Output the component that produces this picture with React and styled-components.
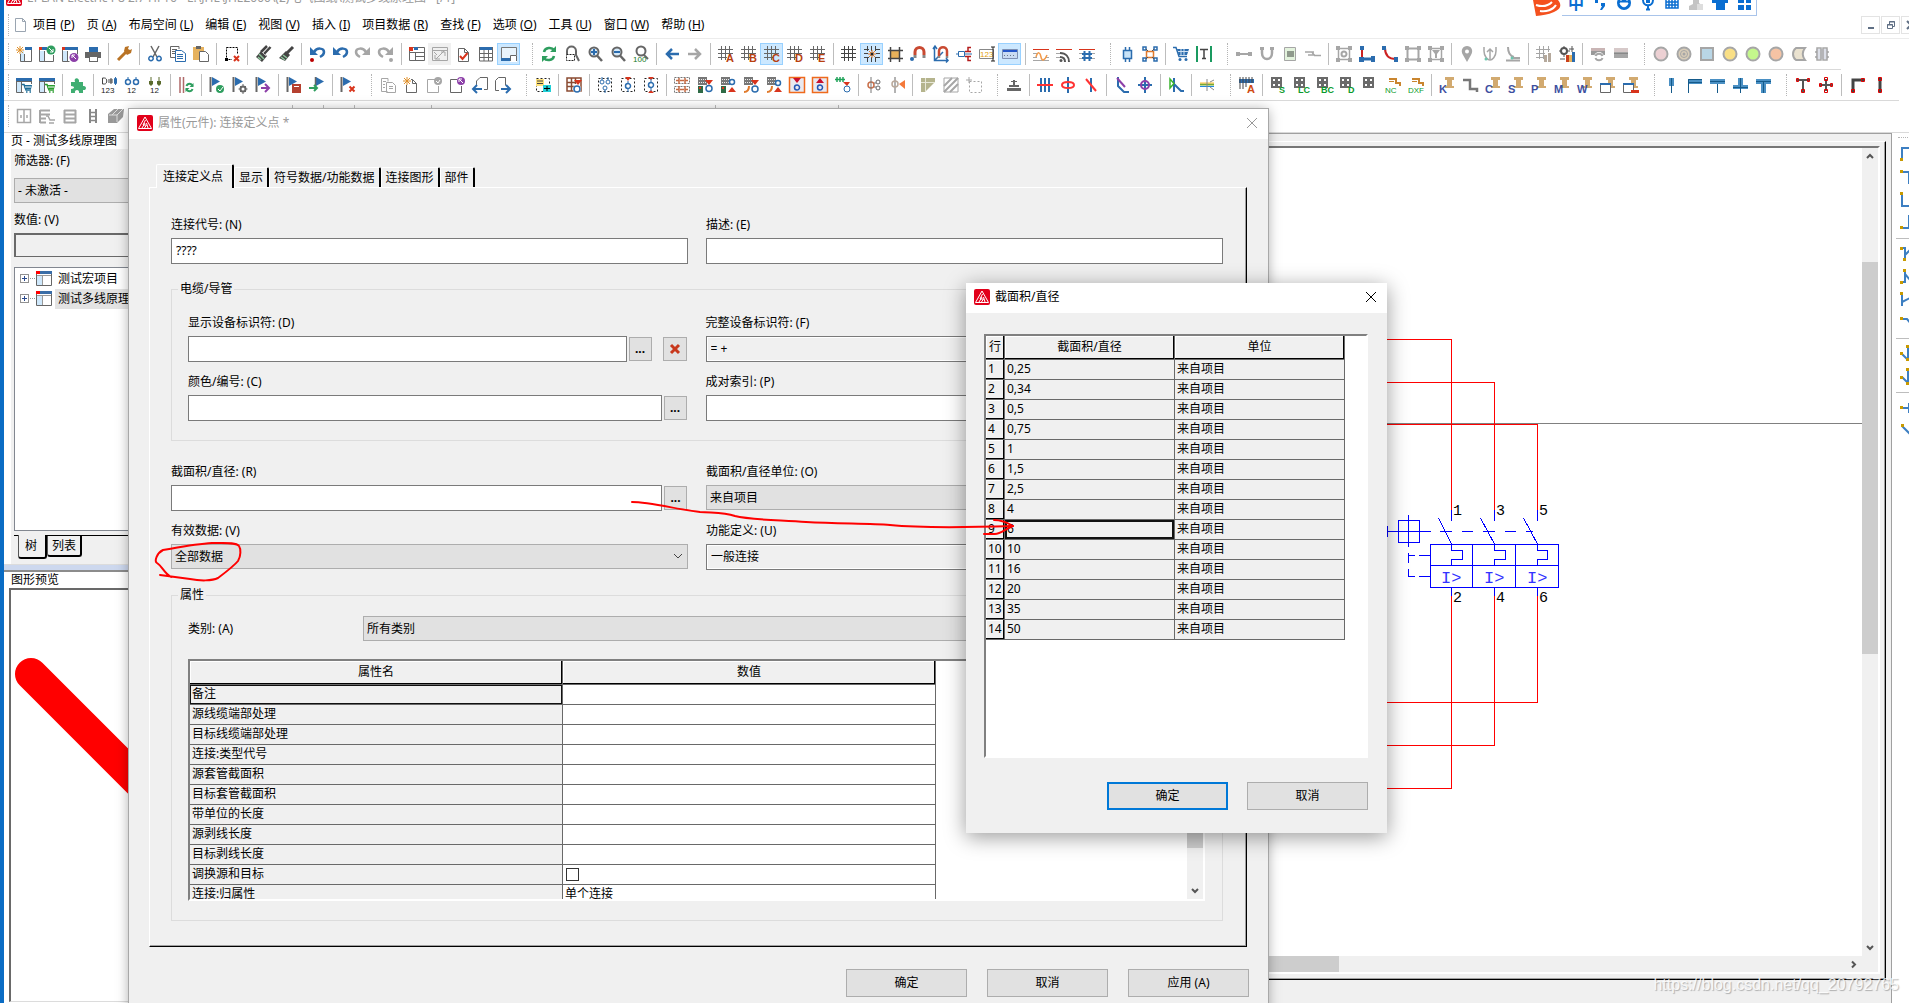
import { useState } from "react";
import styled, { createGlobalStyle } from "styled-components";

const GlobalStyle = createGlobalStyle`
    * {
        box-sizing: border-box;
    }
    body {
        margin: 0;
        overflow: hidden;
    }
    body, button, input, select, table {
        font-family: "Noto Sans", "Noto Sans CJK SC", sans-serif;
        font-size: 12px;
        line-height: 16px;
        color: #000;
    }
`;

/* ---------- icon data ---------- */
// s = stroke [d, colour, width, dash], f = fill [d, colour], t = text [text, x, y, colour, size]
const G = "#666";
const A = "#a6a6a6";
const B = "#2b6cae";
const N = "#2f9e5f";
const R = "#d8341c";
const O = "#c9852f";
const P = "#8c3fa8";
const s = (d, c = G, w = 1, dash) => ({ k: "s", d, c, w, dash });
const f = (d, c = G) => ({ k: "f", d, c });
const t = (text, x, y, c = G, size = 9) => ({ k: "t", text, x, y, c, size });
const dot = (x, y, r, c) => f(`M${x - r} ${y}a${r} ${r} 0 1 0 ${2 * r} 0a${r} ${r} 0 1 0 ${-2 * r} 0z`, c);
const ring = (x, y, r, c, w) => s(`M${x - r} ${y}a${r} ${r} 0 1 0 ${2 * r} 0a${r} ${r} 0 1 0 ${-2 * r} 0z`, c, w);

const star = s("M4 0v8M0 4h8M1 1l6 6M7 1L1 7", "#e0902a");
const hash = s("M3.5 0v14M7.5 0v14M11.5 0v9M0 3.5h15M0 7.5h15M0 11.5h9");
const glass = [ring(7, 6, 4.5, G, 2), s("M10 9.5l5 5.5", G, 2.5)];
const flag = [s("M1.5 0v15", G, 2), f("M3 0l8 4.5L3 9z", B)];
const smallX = s("M9.5 9.5l5 5M14.5 9.5l-5 5", R, 2);
const page = (c = G) => s("M3.5 15.5v-13h6l4 4v9zM9.5 2.5v4h4", c);
const dashBox = (c = "#222") => s("M1.5 1.5h13v13h-13z", c, 1, "2 2");
const sheet = [f("M0 1h16v3H0z", B), f("M1 4h4v11H1z", "#cfe8fb"), s("M.5 4v11.5h7M5.5 4.5v11M1 4.5h15M15.5 4v3")];
const cartSmall = (c) => [f("M8 8h8l-1 4H9z", c), s("M6 7.500h2l2 5.500h5M10 15h1.500M13.500 15H15", c, 1.5), s("M9 10h6", "#fff")];
const node = [f("M1 0h9v8H1z", "#777"), s("M2 2.5h7M2 5.5h7", "#eee", 1, "1 1")];
const redTri = f("M8 3h8l-4 5z", R);
const post = (c) => [f("M6 0h9v3H6zM8 3h5v6H8zM6 9h9v2H6z", "#d2aa70"), t(c, 0, 16, "#3d4fa0", 11)];
const block = (c) => [
    f("M1 0h11v11H1z", "#6a6a6a"),
    f("M3 2h2v2H3zM8 2h2v2H8zM3 7h2v2H3zM8 7h2v2H8z", "#fff"),
    t(c, c.length > 1 ? 5 : 9, 16, "#0a9b2c", 9),
];
const blob = (c) => [dot(8, 8, 6, c), ring(8, 8, 6.5, A, 2)];
const corner = (d) => [s(d, "#3d7fc2", 2)];
const pin = (x, y) => [f(`M${x} ${y}h3v3H${x}z`, "#c89a00")];

const ICONS = {
    newProject: [f("M5 5h3v10H5z", "#cfe8fb"), s("M4.5 8v7.5h11V3"), s("M8.5 8v7"), f("M9 1h7v3H9z", B), star],
    openProject: [f("M0 1h3v3H0z", R), f("M3 1h5v3H3z", B), f("M1 5h4v10H1z", "#cfe8fb"), s("M.5 4v11.5h14V9"), s("M5.5 5v10"), dot(12, 4, 4.5, N), s("M10 2l4 4M14 3v3h-3", "#fff")],
    closeProject: [f("M0 1h3v3H0z", R), f("M3 1h13v3H3z", B), f("M1 5h4v10H1z", "#cfe8fb"), s("M.5 4v11.5h7M5.5 5v10M15.500 4v4"), dot(12, 11.5, 4.5, P), s("M14 13l-4-4M10 12V9h3", "#fff")],
    print: [f("M4 1h9v5H4z", B), f("M0 6h16v6H0z", G), f("M4 10h9v6H4z", G), f("M5 11h7v4H5z", "#fff")],
    wrench: [s("M2 14l8-8", "#b97325", 3), f("M8 5l1-4 4-1-1 3 2 1 2-1-1 4-4 2z", "#b97325")],
    cut: [s("M4 0l6 11M12 0L6 11", G, 1.5), ring(4, 12.5, 2.2, B, 1.5), ring(12, 12.5, 2.2, B, 1.5)],
    copy: [s("M9 3V.5H.5v11H5M2 3.5h5M2 5.5h3M2 7.5h3"), f("M5 4h7l4 3v9H5z", "#fff"), s("M5.5 4.5h6l4 3v8h-10zM7 8.5h6M7 10.5h6M7 12.5h6", B)],
    paste: [f("M0 1h11v13H0z", "#e6b25e"), f("M3 0h5v3H3z", G), f("M6 5h7l3 3v8H6z", "#fff"), s("M6.5 5.5h6l3 3v7h-9z")],
    delSel: [s("M2.5 1.5h11v12h-11z", "#000", 1, "2 1"), f("M1 12h3v3H1z", "#000"), f("M8 8h8v8H8z", "#fff"), s("M10 10l5 5M15 10l-5 5", R, 2)],
    brush: [s("M15.500 1L9 8M12 0L6 6", "#444", 2.5), f("M6 5l6 5-5 6-6-5z", "#444"), s("M4 8l5 5M3 11l3 3", "#8cc49a", 1.5), s("M7 6l4 4", "#bbb")],
    brushOne: [s("M15 1L9 7", "#444", 3), f("M8 5l4 4-5 6-6-3z", "#444"), s("M3 11l4 3M5 9l4 3", "#8cc49a", 1.5)],
    undoDot: [f("M1 1v8h8z", B), s("M5 6c3-5 10-4 10 0 0 3-2 4-4 5", B, 2.5), dot(3, 14, 2, "#b00")],
    undo: [f("M1 1v8h8z", B), s("M5 6c3-5 10-4 10 0 0 3-2 4-4 5", B, 2.5)],
    redo: [f("M15 1v8H7z", A), s("M11 6C8 1 1 2 1 6c0 3 2 4 4 5", A, 2.5)],
    redoDot: [f("M15 1v8H7z", A), s("M11 6C8 1 1 2 1 6c0 3 2 4 4 5", A, 2.5), dot(13, 14, 2, A)],
    navigator: [s("M.5 1.5h15v13H.5zM.5 6.5h15M6.5 6v8M6.5 10.5h9"), f("M0 1h4v4H0z", R), f("M5 1h4v3H5z", B)],
    navigatorOff: [s("M.5 1.5h15v13H.5zM.5 4.5h15", A), s("M4 13l8-8M3 9v4h5M9 6h4v4M2 6l3 3", A)],
    check: [page(), s("M5 10l2.500 3 5-6", R, 2)],
    table: [f("M1 1h14v3H1z", B), s("M1.5 1v14h13V1M1 7.500h14M1 11.500h14M6 4v11M10.500 4v11")],
    preview: [f("M1 2h14v12H1z", "#e9f4fc"), s("M.5 1.500h15v13H.5z", "#777"), f("M0 12h9v3H0z", B), f("M9 9h7v7H9z", "#fff"), s("M9.500 15V9.500h6V15", G)],
    refresh: [s("M3 6c1-5 8-5 10-2M13 10c-1 5-8 5-10 2", N, 2.5), f("M15 0v6H9zM1 16v-6h6z", N)],
    zoomWindow: [s("M3 8V5c0-6 9-6 9 0v4l3 6", G, 2), s("M2.500 8.500h8v6h-8z", "#222", 1, "2 1")],
    zoomIn: [dot(7, 6, 5, "#d6e9f8"), ...glass, s("M4 6h6M7 3v6", B, 2)],
    zoomOut: [dot(7, 6, 5, "#d6e9f8"), ...glass, s("M4 6h6", B, 2)],
    zoom100: [ring(8, 5, 4.5, G, 2), s("M11 9l4 4", G, 2), t("100", 0, 16, "#137a1b", 8)],
    back: [s("M3 8h12M8 3L3 8l5 5", B, 2.5)],
    forward: [s("M1 8h12M8 3l5 5-5 5", A, 2.5)],
    gridA: [hash, t("A", 8, 16, "#b8400e", 11)],
    gridB: [hash, t("B", 8, 16, "#b8400e", 11)],
    gridC: [hash, t("C", 8, 16, "#b8400e", 11)],
    gridD: [hash, t("D", 8, 16, "#b8400e", 11)],
    gridE: [hash, t("E", 8, 16, "#b8400e", 11)],
    grid: [s("M3.500 0v15M7.500 0v15M11.500 0v15M0 3.500h15M0 7.500h15M0 11.500h15", "#444")],
    gridSnap: [s("M3.500 0v5M7.500 0v5M11.500 0v5M3.500 11v5M7.500 11v5M11.500 11v5M0 3.500h5M11 3.500h5M0 7.500h4M12 7.500h4M0 11.500h5M11 11.500h5", "#444"), s("M8 4v8M4 8h8M5 5l6 6M11 5l-6 6", "#f07a20"), dot(8, 8, 1.5, "#222")],
    design: [f("M4 4h9v9H4z", "#e8b15a"), s("M3.500 1v15M12.500 1v15M1 4.500h15M1 12.500h15", "#444", 1.5)],
    magnet: [s("M5 9V6c0-6 9-6 9 0v3", "#c94a32", 3), s("M5 9v3M14 9v3", "#888", 3), dot(2, 13, 2, B)],
    magnetAxis: [s("M1.500 1v13.500H15M0 3l2-3 2 3M13 12l2 2.500-2 2M2 14L10 6", B, 1.5), s("M6 10V5c0-5 8-5 8 0v5", "#c94a32", 2.5), s("M6 10v2M14 10v2", "#888", 2.5)],
    bracket: [s("M15 1.500h-3v4H9M15 14.500h-3v-4H9M15 5.500h-3M15 10.500h-3", "#b31b1b", 1.5), s("M2.500 5.500h6v5h-6zM0 8h2M8 8h8", B)],
    num123: [s("M.5 3.500h14v9H.5z", "#888"), t("123", 1, 11, "#e3a008", 8), s("M14 1v14M12 1h4M12 15h4", "#222")],
    ruler: [f("M0 4h16v9H0z", "#c8daf2"), s("M.5 3.500h15v9H.5z", "#7d8fb3"), s("M1 5h14", "#2456c9", 2), s("M2 9.500h12", "#678", 1, "1 2")],
    wave: [s("M0 3.500h16", R), s("M0 7.500h5M0 14.500h16M0 11.500h4M13 11.500h3", A), s("M3 11c2-6 4-5 5 0s4 3 6-2", "#f29a4a", 1.5)],
    wifi: [s("M0 3.500h16", R), s("M0 7.500h4M0 11.500h4", A), s("M4 7c6 0 9 4 9 9M4 11c3 0 5 2 5 5", "#555", 2), dot(5, 14.5, 1.5, "#555")],
    hashWave: [s("M0 3.500h16", R), s("M0 7.500h16M0 12.500h16", A), s("M5.500 5v10M10.500 5v10M3 8h10M3 12h10", B, 2)],
    chip: [f("M4 5h8v7H4z", "#c9e3f7"), s("M4.500 4.500h8v8h-8zM6.500 1v3M10.500 1v3M6.500 13v3M10.500 13v3", B, 1.5)],
    chipNet: [s("M4.500 5.500h7v6h-7z", "#e07a2c", 1.5), s("M1 1h3v3H1zM12 1h3v3h-3zM1 12h3v3H1zM12 12h3v3h-3z", B, 1.5), s("M4 3l2 2M12 3l-2 2M4 13l2-2M12 13l-2-2", "#555")],
    cart: [s("M0 1.500h3l3 9h8", B, 1.5), f("M4 3h12l-2 6H6z", B), s("M5 5.500h10M8 3v6M11 3v6", "#cfe0f2"), dot(7, 13.5, 1.5, B), dot(13, 13.5, 1.5, B)],
    textT: [s("M1 0v16M15 0v16", "#1a9a60", 2), s("M4 3.500h8M8 3v10M6 12.500h4", "#444", 1.5)],
    link: [s("M1 8h14", A, 2), f("M0 6h4v4H0zM12 6h4v4h-4z", A)],
    curve: [s("M3 2v5c0 8 10 8 10 0V2", A, 2.5), f("M1 1h4v3H1zM11 1h4v3h-4z", A)],
    greenBox: [f("M2 2h12v13H2z", "#e3f3dd"), s("M2.500 1.500h11v13h-11z", A), f("M5 5h7v6H5z", "#8f9a8c")],
    zig: [s("M0 6h9M3 9h7M7 6l2 3M9 9.500h7", A, 1.5)],
    frameGear: [s("M2.500 2.500h11v11h-11z", A, 1.5), f("M0 0h4v4H0zM12 0h4v4h-4zM0 12h4v4H0zM12 12h4v4h-4z", A), ring(8, 8, 2.5, A, 2)],
    elbow: [s("M3 2v11", "#c22", 2), s("M3 13h10", B, 3), f("M1 0h4v4H1zM0 11h5v5H0zM12 10h4v6h-4z", B)],
    elbowRed: [s("M3 2c0 7 3 11 11 11", "#c22", 2), f("M0 0h4v4H0zM12 11h4v5h-4z", B)],
    frame: [s("M2.500 2.500h11v11h-11z", A, 2), f("M0 0h4v4H0zM12 0h4v4h-4zM0 12h4v4H0zM12 12h4v4h-4z", A)],
    frameFilter: [s("M2.500 2.500h11v11h-11z", A, 1.5), f("M0 0h4v4H0zM12 0h4v4h-4zM0 12h4v4H0zM12 12h4v4h-4zM4 4h8L9 8v4H7V8z", A)],
    place: [f("M8 16L4 9C1 4 4 0 8 0s7 4 4 9z", A), dot(8, 5.5, 2, "#fff")],
    forkU: [s("M2 1v4c0 6 4 9 6 9s6-3 6-9V1M8 4v9M5 6l3-3 3 3", A, 1.5), dot(4, 13, 1.5, "#6cc7ae")],
    forkL: [s("M3 1c0 6 2 9 6 10M1 14.500h14M7 12h8", A, 2), dot(7, 12, 1.5, "#6cc7ae")],
    hashPaint: [s("M3.500 0v13M7.500 0v13M12.500 0v6M0 3.500h14M0 7.500h9M0 11.500h7", A), f("M8 9h3v7H8zM12 7h3v9h-3z", "#b5a99c")],
    gearPaint: [ring(5, 5, 3, "#555", 2), s("M5 0v2M5 8v3M0 5h2M8 5h3M13 0v6M10 3h5M1 13h5", "#555"), f("M7 9h3v7H7z", "#c9401c"), f("M10 9h3v7h-3z", "#e8b15a"), f("M13 6h3v10h-3z", B)],
    barsSync: [f("M1 2h14v3H1z", "#c9b5b5"), f("M1 5h14v4H1z", "#999"), dot(9, 11, 5, "#fff"), s("M5.500 10c1-3 6-3 7 0M12.500 12c-1 3-6 3-7 0", A, 2)],
    bars: [f("M1 2h14v4H1z", "#d6c9c9"), f("M1 6h14v6H1z", A), s("M1 7.500h14", "#888")],
    cPink: blob("#ecd0d3"),
    cRings: [...blob("#d9cdb8"), ring(8, 8, 3.5, A, 1), dot(8, 8, 1.5, A)],
    cSquare: [f("M2 2h12v12H2z", "#b9d6e6"), s("M2 2h12v12H2z", A, 2)],
    cYellow: blob("#f9df86"),
    cGreen: blob("#c4f78c"),
    cSalmon: blob("#f5c3a4"),
    cMoon: [f("M3 2h11c-3 4-3 8 0 12H3c-2-4-2-8 0-12z", "#eae2cf"), s("M5 2h9c-3 4-3 8 0 12H5c-4-3-4-9 0-12z", A, 2)],
    cClover: [f("M2 3h12v10H2z", "#dcdfe8"), s("M3 2h4v12H3zM9 2h4v12H9zM2 5v2M14 5v2M2 10v2M14 10v2", A, 1.5)],

    cartSheet: [...sheet, ...cartSmall("#1d6c96")],
    cartSheetG: [...sheet, ...cartSmall("#2a9d2f")],
    puzzle: [f("M1 5h4c-2-5 5-5 4 0h4v4c4-1 4 5 0 4v3H9c1-4-5-4-4 0H1v-4c4 0 4-3 0-3z", "#3fae72")],
    num1: [s("M1.500 1h2c3 0 3 6 0 6h-2zM10 1v6M7 3h5M7 5h5", "#444"), s("M13.500 1.500h2v5h-2zM14.500 0v8", B), t("123", 0, 16, "#222", 8)],
    num2: [ring(4, 5, 2.5, B, 1.5), ring(12, 5, 2.5, B, 1.5), s("M4 0v3M12 0v3", B), t("12", 3, 16, "#222", 8)],
    num3: [s("M4 0v4M12 0v4", "#5a6a2c", 1), f("M2 4h4v3L4 9 2 7zM10 4h4v3l-2 2-2-2z", "#5a6a2c"), t("12", 3, 16, "#222", 8)],
    syncLines: [s("M2 0v16M5.500 0v16", "#b06a6a", 1.5), s("M8.500 9c1-3 5-3 6 0M14.500 12c-1 3-5 3-6 0", N, 2), f("M15.500 6v4h-4zM7.500 15v-4h4z", N)],
    flagOk: [...flag, dot(11, 12, 4, N), s("M9 12l2 2 3-4", "#fff")],
    flagGear: [...flag, ring(11, 12, 2.5, G, 2), s("M11 7v2M11 15v2M6.500 12h2M13.500 12h2M8 9l1 1M13 14l1 1M14 9l-1 1M9 14l-1 1", G)],
    flagNext: [...flag, s("M6 11h7M10 7l4 4-4 4", P, 2)],
    flagBook: [...flag, f("M6 7h9v9H6z", "#b5402f"), s("M8 9.500h5", "#fff")],
    flagIn: [f("M7 0l8 4.500L7 9z", B), s("M6.500 0v9", G, 1.5), s("M0 11h8M5 8l3 3-3 3", N, 2)],
    flagDel: [...flag, smallX],
    pagesOff: [s("M8 4.500v-3H1.500v13h6M6.500 5.500h6l3 3v7h-9zM3 4.500h3M3 7.500h2M3 10.500h2M9 9.500h4M9 11.500h4", A)],
    pageNew: [page(), f("M0 0h8v8H0z", "#fff"), star],
    pageCheck: [s("M9 2.500H1.500v13h11V9", A), dot(12, 4, 4, A), s("M10 4l2 2 2-3", "#fff")],
    pagePurple: [s("M8 2.500H1.500v13h11V9"), dot(12, 4, 4, P), s("M14 6l-4-4M10 5V2h3", "#fff")],
    pageLeft: [s("M4.500 8V4l3.500-3.500h7.500v12H12"), s("M1 12h9M5 8l-4 4 4 4", B, 2)],
    pageRight: [s("M4 13.500H.5V3.500l3-3h7v8"), s("M6 12h9M11 8l4 4-4 4", B, 2)],
    addBox: [dashBox(), f("M1 2h8v7H1z", "#ffe27a"), s("M2 4h6M2 6.500h6", "#444"), f("M8 8h8v7H8z", "#20d0d8"), s("M12 9v5M9 11.500h6", "#000")],
    symTable: [s("M1 1h14v13H1zM1 5.500h8M1 9.500h8M5.500 1v13M9.500 1v6", "#8a4b32", 1.5), redTri, dot(11, 12, 4, "#fff"), ring(11, 12, 3, B, 1.5)],
    symA: [dashBox(), ring(5, 5, 2, B), ring(11, 5, 2, B), ring(8, 11, 2, B), s("M5 0v3M11 0v3M8 13v3", B)],
    symB: [dashBox(), f("M5 0h6l-3 4z", R), ring(8, 9, 2.5, B, 1.5), s("M8 4v2M8 12v3", B)],
    symC: [dashBox(), f("M5 0h6l-3 3zM5 16h6l-3-3z", R), ring(8, 8, 2.5, B, 1.5), s("M8 2v3M8 11v3", B)],
    boxesDash: [s("M.5.500h15v6H.5zM.5 9.500h15v6H.5z", "#777", 1, "2 1"), s("M2 3.500h3M6 3.500h4M11 3.500h3M2 12.500h3M6 12.500h4M11 12.500h3M5 1v6M11 1v6M5 9v6M11 9v6", "#c56a42", 1.5)],
    nodeA: [...node, redTri, f("M1 9h5v7H1z", "#2e6a45"), f("M2 10h2v2H2z", R), ring(12, 11.5, 3, B, 1.5)],
    nodeB: [...node, ring(12, 5, 2.5, B, 1.5), f("M8 15h8l-4-5z", R), f("M1 9h5v7H1z", "#2e6a45"), f("M2 10h2v2H2z", R)],
    nodeC: [...node, redTri, s("M1 15c4 0 5-2 5-6", "#e07a2c", 2), ring(12, 12, 3, B, 1.5)],
    nodeD: [...node, ring(12, 6, 2.5, B, 1.5), f("M8 15h8l-4-5z", R), s("M1 15c4 0 5-2 5-6", "#e07a2c", 2)],
    frameDown: [f("M0 0h16v16H0z", "#e9e9ef"), s("M.5.5h15v15H.5z", "#ef6a1c", 1.5), f("M4 1h8L8 6z", "#c9102e"), ring(8, 10.5, 2.5, "#2456b5", 1.5)],
    frameUp: [f("M0 0h16v16H0z", "#e9e9ef"), s("M.5.5h15v15H.5z", "#ef6a1c", 1.5), f("M4 6h8L8 1z", "#c9102e"), ring(8, 10.5, 2.5, "#2456b5", 1.5)],
    coilGreen: [s("M0 2.500h10M2 0v5M5 0v5M8 0v5", "#20a35a", 1.5), f("M8 5h7l-3 4z", R), ring(12, 12, 3, B)],
    pairGrey: [ring(5, 8, 3, "#c9704a", 1.5), s("M5 0v16M8 6h2M8 10h2", "#777"), ring(12, 5, 2, "#666"), ring(12, 11, 2, "#666")],
    pairRed: [s("M6 0v16"), ring(6, 7, 3, "#b9a89a", 1.5), f("M10 7l6-4v9z", "#f4793a")],
    quarter: [f("M1 1h14v4L5 15H1z", "#b5b48d"), s("M1 5.500h14M5.500 1v14", "#e8e8d8")],
    hatch: [s("M1 9l8-8M1 15L15 1M7 15l8-8", A, 2), s("M1 1h14v14H1z", A)],
    dashStar: [s("M3.500 4.500h12v11h-12z", A, 1, "2 2"), s("M3 0v6M0 3h6", A)],
    rail: [f("M1 11h14v3H1zM3 8h10v2H3zM7 3h2v5H7z", "#666"), s("M5 4.500h6", "#666")],
    busA: [s("M4 1v14M8 1v14M12 1v14", B, 2), s("M0 8h16", "#f33", 2)],
    busB: [s("M8 0v16", B, 2), s("M2 8c0-4 12-4 12 0s-12 4-12 0z", "#f33", 2)],
    busC: [s("M8 1v14", B, 2), s("M3 2l10 12", "#f33", 2)],
    defA: [s("M4 0v9l6 6h5", B, 2), s("M3 1l8 9", P, 2)],
    defB: [s("M8 0v16M1 8h14", B, 2), ring(8, 8, 4, P, 2)],
    defC: [s("M6 1v14M6 7l7 7h3", B, 2), s("M2 2l4 4.500L2 11z", "#3bb52f", 1.5)],
    rainbow: [s("M1 7.500h14", "#7a3", 2), s("M1 6h14", "#fb3"), s("M1 9.500h14", "#28d"), s("M8 2v12M11 5l4-2M11 10l4 3", "#888")],
    barsA: [f("M0 2h15v4H0z", B), s("M1 0v12M4 0v12M7 0v10M10 0v6M13 0v6", "#444"), t("A", 8, 16, "#d04a12", 11)],
    blkS: block("S"),
    blkLC: block("LC"),
    blkBC: block("BC"),
    blkD: block("D"),
    blk: block(""),
    nc: [s("M4 2h7v4h4v3", O, 2), s("M4 4.500h5", O), t("NC", 0, 16, "#0a9b2c", 8)],
    dxf: [s("M4 2h7v4h4v3", O, 2), s("M4 4.500h5", O), t("DXF", 0, 16, "#0a9b2c", 8)],
    postK: post("K"),
    pipe: [s("M1 3h7v9h7v3", "#777", 2.5)],
    postC: post("C"),
    postS: post("S"),
    postP: post("P"),
    postM: post("M"),
    postW: post("W"),
    postWin: [...post(""), f("M0 6h11v10H0z", "#fff"), s("M.5 6.500h10v9H.5z"), f("M0 6h11v2H0z", B)],
    postWinDel: [...post(""), f("M0 6h11v10H0z", "#fff"), s("M.5 6.500h10v9H.5z"), f("M0 6h11v2H0z", B), f("M8 13h8v3H8z", R)],
    duct1: [f("M6 1h5v8H6z", "#4a90c4"), s("M8.500 1v15", "#155a8a")],
    duct2: [f("M2 2h14v5H2z", "#4a90c4"), s("M2.500 16V2.500H16M2 5.500h14", "#155a8a", 1)],
    duct3: [f("M1 2h15v5H1z", "#4a90c4"), s("M1 4.500h15M8.500 7v9", "#155a8a", 1)],
    duct4: [f("M1 8h15v4H1zM6 1h5v8H6z", "#4a90c4"), s("M1 10.500h15M8.500 1v15", "#155a8a", 1)],
    duct5: [f("M1 2h15v5H1zM6 6h5v10H6z", "#4a90c4"), s("M1 4.500h15M8.500 4v12", "#155a8a", 1)],
    teeRed: [s("M2 3h12M8 3v12", "#555", 2), s("M1.500 1.500h2v3h-2zM12.500 1.500h2v3h-2zM6.500 12.500h3v3h-3z", "#d00")],
    crossRed: [s("M2 8h12M8 2v12", "#555", 2), s("M1.500 6.500h2v3h-2zM12.500 6.500h2v3h-2zM6.500 12.500h3v3h-3zM6.500.5h3v3h-3z", "#d00")],
    cornerRed: [s("M4 15V3h11", "#444", 3), s("M12.500 1.500h3v3h-3zM2.500 12.500h3v3h-3z", "#d00")],
    stickRed: [s("M8 1v14", "#444", 3), s("M6.500.5h3v3h-3zM6.500 12.500h3v3h-3z", "#d00")],

    cab1: [s("M1.500 1.500h13v13h-13zM8 1v14", A, 1.5), s("M5 7v3M11 7v3", A, 1.5)],
    cab2: [s("M1 2.500h10M1 6.500h10M1 10.500h6M1 14.500h6M1 2v13", A, 2), s("M7 8h2l2 4h5M10 15h5", A, 1.5)],
    cab3: [s("M2 2.500h12M2 6.500h12M2 10.500h12M2 14.500h12M2.500 2v13M13.500 2v13", A, 2)],
    cab4: [s("M5 1v14M11 1v14", "#888", 2), s("M5 4.500h6M5 8.500h6M5 12.500h6", "#888", 1.5)],
    cab5: [f("M0 6l6-5h10l-1 8-6 6H0z", "#999"), s("M1 7h8v7M9 7l6-6M4 7l6-6", "#ddd")],

    r1: [...corner("M1 14V2h15"), ...pin(-1, 12)],
    r2: [...corner("M0 3h16M8 3v12"), ...pin(-1, 1)],
    r3: [...corner("M1 2v12h15"), ...pin(-1, 0)],
    r4: [...corner("M0 13h16M8 0v12"), ...pin(-1, 11)],
    r5: [...corner("M1 2h3v12M4 9l6-6"), ...pin(-1, 1), ...pin(2, 12)],
    r6: [...corner("M1 13h3V2M4 5l6 7"), ...pin(-1, 12), ...pin(2, 0)],
    r7: [...corner("M1 2v12M1 10l8-4"), ...pin(-1, 0)],
    r8: [...corner("M0 4h6l5 6"), ...pin(-1, 2)],
    r9: [...corner("M1 8l5 5M7 1v14"), ...pin(-1, 6), ...pin(5, -1), ...pin(5, 12)],
    r10: [...corner("M1 8l5 5M7 13V1h4"), ...pin(-1, 7), ...pin(5, -1), ...pin(5, 13)],
    r11: [...corner("M1 8h10M8 3v10"), ...pin(-1, 6)],
    r12: [...corner("M1 3l12 12"), ...pin(0, 1)],
};

const ROW1 = ": newProject openProject closeProject print | wrench | cut copy paste | delSel | brush brushOne | undoDot undo redo redoDot | navigator navigatorOff- check table preview* : refresh zoomWindow zoomIn zoomOut zoom100 | back forward | gridA gridB gridC* gridD gridE | grid gridSnap* design magnet magnetAxis bracket num123 ruler* | wave wifi hashWave : chip chipNet | cart textT : link curve greenBox zig | frameGear elbow elbowRed frame frameFilter | place forkU forkL | hashPaint gearPaint | barsSync bars : cPink cRings cSquare cYellow cGreen cSalmon cMoon cClover";
const ROW2 = ": cartSheet cartSheetG | puzzle | num1 num2 num3 | syncLines | flagOk flagGear flagNext | flagBook flagIn | flagDel : pagesOff pageNew pageCheck pagePurple pageLeft pageRight : addBox | symTable | symA symB symC | boxesDash nodeA nodeB nodeC nodeD frameDown frameUp coilGreen | pairGrey pairRed | quarter hatch dashStar : rail | busA busB busC | defA defB | defC | rainbow : barsA | blkS blkLC blkBC blkD blk nc dxf | postK pipe postC postS postP postM postW postWin postWinDel : duct1 duct2 duct3 duct4 duct5 : teeRed crossRed | cornerRed stickRed";
const ROW3 = ": cab1 cab2 cab3 cab4 cab5 cab3 cab3 cab4 cab5 cab1 cab2 cab3 | cab3 | cab3 | cab1 cab4 cab3 | cab5 cab4 cab3 cab1 cab2 cab3 cab4 cab3 cab3 cab1 cab4 cab3 | cab3 cab4 cab1 cab3 cab3 | cab4 cab3 cab5 cab4 cab3";
const RAIL = ": r1 r2 r3 r4 | r5 r6 r7 r8 | r9 r10 | r11 r12";

const MENUS = [
    ["项目", "P"], ["页", "A"], ["布局空间", "L"], ["编辑", "E"], ["视图", "V"], ["插入", "I"],
    ["项目数据", "R"], ["查找", "F"], ["选项", "O"], ["工具", "U"], ["窗口", "W"], ["帮助", "H"],
];

const PROPERTIES = [
    "备注", "源线缆端部处理", "目标线缆端部处理", "连接:类型代号", "源套管截面积", "目标套管截面积",
    "带单位的长度", "源剥线长度", "目标剥线长度", "调换源和目标", "连接:归属性",
];

const SECTIONS = ["0,25", "0,34", "0,5", "0,75", "1", "1,5", "2,5", "4", "6", "10", "16", "20", "35", "50"];

/* ---------- main window ---------- */
const Screen = styled.div`
    position: relative;
    display: flex;
    height: 100vh;
    overflow: hidden;
    background: #fff;
`;

const DesktopEdge = styled.div`
    flex: 0 0 4px;
    background: #0a6cc4;
`;

const Window = styled.div`
    flex: 1;
    min-width: 0;
    display: flex;
    flex-direction: column;
`;

const TitleBar = styled.header`
    flex: 0 0 28px;
    margin-top: -16px;
    padding-left: 2px;
    display: flex;
    align-items: center;
    gap: 5px;
    color: #999;
    white-space: nowrap;
`;

const MenuBar = styled.nav`
    flex: 0 0 27px;
    display: flex;
    align-items: center;
    border-bottom: 1px solid #ececec;
`;

const MenuItem = styled.button`
    border: 0;
    padding: 0 6px;
    background: none;
    white-space: nowrap;
`;

const MdiButtons = styled.div`
    margin-left: auto;
    display: flex;
    gap: 1px;
    margin-right: -11px;
`;

const MdiButton = styled.button`
    width: 19px;
    height: 18px;
    padding: 0;
    border: 1px solid #e3e3e3;
    background: #fff;
    display: flex;
    align-items: center;
    justify-content: center;
`;

const Bar = styled.div`
    flex: 0 0 ${(p) => p.$height || 31}px;
    width: ${(p) => (p.$full ? "100%" : "max-content")};
    padding-right: 8px;
    padding-bottom: ${(p) => (p.$full ? 2 : 0)}px;
    display: flex;
    align-items: center;
    border-bottom: 1px solid #d9d9d9;
`;

const Rail = styled.aside`
    flex: 0 0 17px;
    padding-top: 4px;
    display: flex;
    flex-direction: column;
    align-items: flex-start;
    overflow: hidden;
`;

const ToolButton = styled.button`
    flex: none;
    width: 23px;
    height: ${(p) => (p.$rail ? 23 : 22)}px;
    margin-left: ${(p) => (p.$rail ? 5 : 0)}px;
    padding: 0;
    border: 1px solid ${(p) => (p.$on ? "#99d1ff" : "transparent")};
    background: ${(p) => (p.$on ? "#cce8ff" : p.$dim ? "#f0f0f0" : "none")};
    display: flex;
    align-items: center;
    justify-content: center;

    svg {
        overflow: visible;
    }
`;

const Separator = styled.i`
    flex: none;
    width: ${(p) => (p.$rail ? "17px" : "1px")};
    height: ${(p) => (p.$rail ? "1px" : "22px")};
    margin: ${(p) => (p.$rail ? "4px 0 3px 4px" : "0 3px 0 4px")};
    background: #bdbdbd;
`;

const Grip = styled.i`
    flex: none;
    ${(p) => (p.$rail
        ? "width: 12px; margin: 0 0 4px 6px; border-top: 1px dotted #b5b5b5;"
        : "height: 22px; margin: 0 4px 0 12px; border-left: 1px dotted #b5b5b5;")}

    &:first-child {
        ${(p) => (p.$rail ? "" : "margin: 0 3px 0 4px;")}
    }
`;

const Workspace = styled.main`
    flex: 1;
    min-height: 0;
    display: flex;
`;

/* ---------- side panel ---------- */
const Side = styled.aside`
    flex: 0 0 260px;
    display: flex;
    flex-direction: column;
`;

const SideTitle = styled.h2`
    margin: 0;
    padding-left: 7px;
    font-size: 12px;
    font-weight: 400;
    line-height: 16px;
`;

const SideBody = styled.section`
    margin-left: 7px;
    padding: 4px 0 0 3px;
    background: #f0f0f0;
    display: flex;
    flex-direction: column;
`;

const Tree = styled.ul`
    height: 264px;
    margin: 10px 0 4px;
    padding: 1px 0 0 5px;
    border: 1px solid #828790;
    background: #fff;
    list-style: none;
`;

const TreeItem = styled.li`
    height: 20px;
    display: flex;
    align-items: center;
    white-space: nowrap;

    span {
        padding: 2px 3px;
        background: ${(p) => (p.$selected ? "#e3e3e3" : "none")};
    }
    svg {
        margin-right: 3px;
    }
`;

const PanelTabs = styled.div`
    height: 29px;
    display: flex;
    align-items: flex-start;
    border-top: 1px solid #000;
    padding-left: 4px;
`;

const PanelTab = styled.button`
    height: ${(p) => (p.$on ? 24 : 21)}px;
    margin-top: ${(p) => (p.$on ? -1 : 0)}px;
    padding: 0 ${(p) => (p.$on ? 8 : 4)}px 0 ${(p) => (p.$on ? 6 : 4)}px;
    border: 1px solid #555;
    border-top: 0;
    border-right: 2px solid #000;
    border-bottom: 2px solid #000;
    border-radius: 0 0 3px 3px;
    background: #f0f0f0;
`;

const Splitter = styled.div`
    height: 8px;
    border-top: 1px solid #dcdcdc;
    border-bottom: 2px solid #8c8c8c;
    background: #cdd8ee;
`;

const Preview = styled.div`
    flex: 1;
    margin: 0 0 1px 5px;
    border-top: 2px solid #696969;
    border-left: 2px solid #696969;
    border-bottom: 1px solid #dcdcdc;
    overflow: hidden;

    svg {
        display: block;
        width: 100%;
        height: 100%;
    }
`;

/* ---------- canvas ---------- */
const Pane = styled.section`
    flex: 1;
    min-width: 0;
    display: flex;
    padding: 7px 5px 23px 0;
    border-top: 1px solid #a0a0a0;
    border-right: 1px solid #a0a0a0;
    background: #f0f0f0;
`;

const Frame = styled.div`
    flex: 1;
    min-width: 0;
    display: flex;
    padding: 4px 5px 5px 4px;
    border-top: 1px solid #fff;
    border-right: 1px solid #000;
    border-bottom: 1px solid #000;
    box-shadow: inset -1px -1px 0 #a0a0a0;
`;

const Well = styled.div`
    flex: 1;
    min-width: 0;
    display: grid;
    grid-template: minmax(0, 1fr) 16px / minmax(0, 1fr) 16px;
    border: 2px solid;
    border-color: #777 #fff #fff #777;
    background: #f0f0f0;
`;

const Drawing = styled.svg`
    display: block;
    width: 100%;
    height: 100%;
    background: #fff;
    fill: none;
    font-family: "Liberation Mono", monospace;
    font-size: 15px;
`;

const Scroll = styled.div`
    display: flex;
    flex-direction: ${(p) => (p.$across ? "row" : "column")};
    align-items: stretch;
    background: #f0f0f0;

    svg {
        flex: 0 0 17px;
        align-self: center;
    }
`;

const Part = styled.div`
    flex: ${(p) => p.$size};
    background: ${(p) => (p.$thumb ? "#cdcdcd" : "none")};
`;

/* ---------- dialogs ---------- */
const Dialog = styled.section`
    position: absolute;
    left: ${(p) => p.$left}px;
    top: ${(p) => p.$top}px;
    width: ${(p) => p.$width}px;
    display: flex;
    flex-direction: column;
    background: #f0f0f0;
    outline: ${(p) => (p.$front ? "0" : "1px solid #a8a8a8")};
    box-shadow: ${(p) => (p.$front ? "0 4px 20px rgba(0, 0, 0, 0.4)" : "0 1px 12px rgba(0, 0, 0, 0.35)")};
`;

const DialogTitle = styled.header`
    height: 30px;
    padding: 0 10px 2px 8px;
    background: #fff;
    color: ${(p) => (p.$front ? "#000" : "#999")};
    display: flex;
    align-items: center;
    gap: 5px;
`;

const CloseButton = styled.button`
    margin-left: auto;
    padding: 0;
    border: 0;
    background: none;
    display: flex;
`;

const DialogBody = styled.div`
    padding: 25px 21px 30px 20px;
`;

const Tabs = styled.div`
    height: 23px;
    padding-left: 7px;
    display: flex;
    align-items: flex-end;
`;

const Tab = styled.button`
    position: relative;
    height: ${(p) => (p.$on ? 24 : 20)}px;
    margin-bottom: ${(p) => (p.$on ? -1 : 0)}px;
    padding: 0 ${(p) => (p.$on ? 9 : 4)}px 0 ${(p) => (p.$on ? 6 : 4)}px;
    border: 1px solid #fff;
    border-right: 2px solid #000;
    border-bottom: 0;
    border-radius: 2px 2px 0 0;
    background: #f0f0f0;
    white-space: nowrap;
`;

const TabPanel = styled.div`
    padding: 29px 23px 25px 21px;
    border: 1px solid;
    border-color: #fff #000 #000 #fff;
    box-shadow: inset -1px -1px 0 #a0a0a0;
`;

const Pair = styled.div`
    display: grid;
    grid-template-columns: 1fr 1fr;
    gap: 12px 18px;
    margin-top: ${(p) => p.$top || 0}px;
`;

const Group = styled.fieldset`
    min-width: 0;
    margin: 17px 0 0;
    padding: ${(p) => p.$top}px 17px 19px 16px;
    border: 1px solid #dcdcdc;
`;

const Legend = styled.legend`
    margin-left: -10px;
    padding: 0 2px;
`;

const FieldBox = styled.div`
    min-width: 0;
    display: flex;
    flex-direction: column;
    gap: ${(p) => p.$gap || 5}px;
    padding-right: ${(p) => p.$pad || 0}px;
`;

const FieldLine = styled.div`
    display: flex;
    align-items: center;
    gap: 2px;
`;

const TextInput = styled.input`
    flex: 1;
    min-width: 0;
    height: ${(p) => p.$height || 26}px;
    padding: 0 4px 2px;
    border: 1px solid #7a7a7a;
    border-radius: 0;
    background: ${(p) => (p.readOnly ? "#f0f0f0" : "#fff")};
    box-shadow: ${(p) => (p.readOnly ? "inset 0 0 0 1px #fff" : "none")};
    outline: 0;
`;

const SunkenInput = styled(TextInput)`
    flex: none;
    height: 24px;
    margin-top: -4px;
    border-width: 2px 0 1px 2px;
    border-color: #696969;
    background: #f0f0f0;
`;

const MiniButton = styled.button`
    flex: none;
    width: ${(p) => (p.$clear ? 24 : 23)}px;
    height: 24px;
    margin-left: ${(p) => (p.$clear ? 9 : 0)}px;
    margin-right: ${(p) => (p.$last ? 1 : 0)}px;
    padding: 0;
    border: 1px solid #adadad;
    background: #e1e1e1;
    font-weight: 700;
    display: flex;
    align-items: center;
    justify-content: center;
`;

const SelectBox = styled.div`
    position: relative;
    flex: 1;
    display: flex;

    svg {
        position: absolute;
        right: 4px;
        top: 8px;
        pointer-events: none;
    }
`;

const Select = styled.select`
    flex: 1;
    height: 25px;
    padding: 0 3px;
    border: 1px solid #adadad;
    border-radius: 0;
    background: #e1e1e1;
    appearance: none;
`;

const CategoryRow = styled.div`
    display: grid;
    grid-template-columns: 175px 1fr;
    align-items: center;
`;

const GridBox = styled.div`
    height: ${(p) => p.$height}px;
    margin-top: ${(p) => p.$top || 0}px;
    border: 2px solid;
    border-color: #808080 #fff #fff #808080;
    background: #fff;
    display: flex;
    justify-content: space-between;
    overflow: hidden;
`;

const ScrollSlot = styled.div`
    flex: 0 0 16px;
    display: flex;
    flex-direction: column;
    overflow: hidden;

    > * {
        flex: 1;
    }
`;

const Grid = styled.table`
    align-self: flex-start;
    width: ${(p) => p.$width}px;
    table-layout: fixed;
    border-collapse: separate;
    border-spacing: 0;

    th, td {
        height: 20px;
        padding: 0 2px 2px;
        border: 0 solid #696969;
        border-width: 0 1px 1px 0;
        font-weight: 400;
        text-align: left;
        white-space: nowrap;
    }
    thead th {
        height: 24px;
        text-align: center;
    }
`;

const HeadCell = styled.th`
    background: #f0f0f0;
    box-shadow: inset -1px -1px 0 #000, inset 1px 1px 0 #fff;
`;

const Cell = styled.td`
    background: ${(p) => (p.$grey ? "#f0f0f0" : "#fff")};
    box-shadow: ${(p) => (p.$ring ? `inset 0 0 0 ${p.$ring}px #111` : "none")};
`;

const TickBox = styled.input`
    display: block;
    appearance: none;
    width: 13px;
    height: 13px;
    margin: 1px 1px 0;
    border: 1px solid #333;
    background: #fff;
`;

const Actions = styled.div`
    display: flex;
    justify-content: flex-end;
    gap: ${(p) => p.$gap}px;
    margin: ${(p) => p.$margin};
`;

const ActionButton = styled.button`
    width: 121px;
    height: 28px;
    padding: 0;
    border: ${(p) => (p.$primary ? "2px solid #0078d7" : "1px solid #adadad")};
    background: #e1e1e1;
`;

const PickerBody = styled.div`
    padding: 21px 19px 23px 18px;
`;

/* ---------- floating layers ---------- */
const Ink = styled.svg`
    position: absolute;
    inset: 0;
    width: 100%;
    height: 100%;
    fill: none;
    stroke: #f00;
    stroke-width: 2;
    stroke-linecap: round;
    stroke-linejoin: round;
    pointer-events: none;
`;

const InputBar = styled.div`
    position: absolute;
    top: 0;
    right: 152px;
    height: 16px;
    display: flex;
    align-items: flex-start;

    > div {
        height: 16px;
        padding: 0 4px 0 6px;
        display: flex;
        gap: 8px;
        border: 1px solid #a9c4ea;
        border-top: 0;
        border-left: 0;
        background: #fff;
        overflow: hidden;
    }
    svg {
        display: block;
    }
`;

const Lang = styled.span`
    margin-top: -5px;
    width: 16px;
    font-size: 16px;
    line-height: 16px;
    font-weight: 700;
    color: #0a6ed1;
`;

const Watermark = styled.span`
    position: absolute;
    right: 10px;
    bottom: 8px;
    font-family: "Liberation Sans", sans-serif;
    font-size: 16px;
    line-height: 20px;
    color: rgba(255, 255, 255, 0.85);
    text-shadow: 1px 1px 1px rgba(0, 0, 0, 0.28);
`;

/* ---------- small pieces ---------- */
const Glyph = ({ shapes }) => (
    <svg width="16" height="16" viewBox="0 0 16 16" fill="none" aria-hidden="true">
        {shapes.map((x, i) => {
            if (x.k === "t") {
                return x.text && (
                    <text key={i} x={x.x} y={x.y} fill={x.c} fontSize={x.size} fontWeight={x.size < 9 ? 400 : 700} fontFamily="Liberation Sans, sans-serif">
                        {x.text}
                    </text>
                );
            }
            return x.k === "f"
                ? <path key={i} d={x.d} fill={x.c} />
                : <path key={i} d={x.d} stroke={x.c} strokeWidth={x.w} strokeDasharray={x.dash} />;
        })}
    </svg>
);

const Tools = ({ items, rail }) => (
    <>
        {items.split(" ").map((item, i) => {
            if (item === "|") return <Separator key={i} $rail={rail} />;
            if (item === ":") return <Grip key={i} $rail={rail} />;
            const name = item.replace(/[*-]/, "");
            return (
                <ToolButton key={i} aria-label={name} $rail={rail} $on={item.endsWith("*")} $dim={item.endsWith("-")}>
                    <Glyph shapes={ICONS[name]} />
                </ToolButton>
            );
        })}
    </>
);

const Logo = () => (
    <svg width="16" height="16" viewBox="0 0 16 16" fill="none">
        <rect width="16" height="16" rx="2" fill="#e2001a" />
        <path d="M8 2L1.500 13.500h13z" stroke="#fff" />
        <path d="M8.500 5L6 10h3.500L7.500 13M5 13l3-5M11 13L9.500 8" stroke="#fff" />
    </svg>
);

const Cross = ({ color }) => (
    <svg width="12" height="12" viewBox="0 0 12 12" stroke={color}>
        <path d="M1 1l10 10M11 1L1 11" />
    </svg>
);

const Chevron = () => (
    <svg width="12" height="8" viewBox="0 0 12 8" fill="none" stroke="#444">
        <path d="M2 2l4 4 4-4" />
    </svg>
);

const Arrow = ({ turn = 0 }) => (
    <svg width="16" height="17" viewBox="0 0 16 17" fill="none" stroke="#555" strokeWidth="2">
        <path d="M5 10l3-3 3 3" transform={`rotate(${turn} 8 8.500)`} />
    </svg>
);

const Field = ({ id, label, children }) => (
    <FieldBox>
        <label htmlFor={id}>{label}</label>
        <FieldLine>{children}</FieldLine>
    </FieldBox>
);

const Dropdown = ({ id, value }) => (
    <SelectBox>
        <Select id={id} defaultValue={value}>
            <option>{value}</option>
        </Select>
        <Chevron />
    </SelectBox>
);

const TreeIcon = () => (
    <svg width="32" height="20" viewBox="0 0 32 20" fill="none">
        <rect x=".5" y="5.500" width="8" height="8" fill="#fff" stroke="#919191" />
        <path d="M2 9.500h5M4.500 7v5" stroke="#2a4a8c" />
        <path d="M10 9.500h5" stroke="#999" strokeDasharray="1 1" />
        <path d="M16.500 3.500h15v13h-15z" fill="#fff" stroke="#666" />
        <path d="M17 7h5v9h-5z" fill="#cfe8fb" />
        <path d="M22.500 7v9M17 6.500h14" stroke="#999" />
        <path d="M16 2h16v3H16z" fill="#3a6ea8" />
        <path d="M16 2h4v3h-4z" fill="#f00" />
    </svg>
);

const Circuit = () => (
    <Drawing>
        <g transform="translate(-270 -148)" shapeRendering="crispEdges">
            <path d="M1200 423.500H1880" stroke="#808080" />
            <path stroke="#f00" d="M1200 339.500H1451.500V510M1200 382.500H1494.500V510M1200 424.500H1537.500V510M1200 702.500H1537.500V596M1200 745.500H1494.500V596M1200 788.500H1451.500V596" />
            <g stroke="#00f">
                <path d="M1451.500 510v11M1494.500 510v11M1537.500 510v11M1451.500 588v8M1494.500 588v8M1537.500 588v8" />
                <path d="M1430.500 544.500h128v43h-128zM1430 565.500h129M1472.500 544v43M1515.500 544v43" />
                <path d="M1438.500 518l13 26M1480.500 518l14 26M1523.500 518l14 26" />
                <path d="M1387.500 526v11M1387 531.500h44M1440 531.500h12M1462 531.500h11M1483 531.500h12M1505 531.500h11M1526 531.500h7" />
                <path d="M1398.500 520.500h21v22h-21zM1408.500 515v32M1408.500 553v10M1408.500 569v7.500h6M1408 555.500h7M1419 555.500h11M1419 576.500h11" />
                <path d="M1451.500 544v6.500h11v9h-11v6M1494.500 544v6.500h11v9h-11v6M1537.500 544v6.500h10v9h-10v6" />
            </g>
            <g fill="#000">
                <text x="1453" y="515">1</text>
                <text x="1496" y="515">3</text>
                <text x="1539" y="515">5</text>
                <text x="1453" y="602">2</text>
                <text x="1496" y="602">4</text>
                <text x="1539" y="602">6</text>
            </g>
            <g fill="#33f" fontSize="17">
                <text x="1441" y="583">I&gt;</text>
                <text x="1484" y="583">I&gt;</text>
                <text x="1527" y="583">I&gt;</text>
            </g>
        </g>
    </Drawing>
);

const PropertyDialog = () => (
    <Dialog $left={129} $top={109} $width={1139}>
        <DialogTitle>
            <Logo />
            <span>属性(元件): 连接定义点 *</span>
            <CloseButton aria-label="close"><Cross color="#999" /></CloseButton>
        </DialogTitle>
        <DialogBody>
            <Tabs>
                {["连接定义点", "显示", "符号数据/功能数据", "连接图形", "部件"].map((name, i) => (
                    <Tab key={name} $on={i === 0}>{name}</Tab>
                ))}
            </Tabs>
            <TabPanel>
                <Pair>
                    <Field id="code" label="连接代号: (N)"><TextInput id="code" defaultValue="????" /></Field>
                    <Field id="desc" label="描述: (E)"><TextInput id="desc" /></Field>
                </Pair>
                <Group $top={18}>
                    <Legend>电缆/导管</Legend>
                    <Pair>
                        <Field id="shown" label="显示设备标识符: (D)">
                            <TextInput id="shown" />
                            <MiniButton>...</MiniButton>
                            <MiniButton $clear $last aria-label="clear">
                                <svg width="12" height="12" viewBox="0 0 12 12" stroke="#c8381c" strokeWidth="3"><path d="M2 2l8 8M10 2l-8 8" /></svg>
                            </MiniButton>
                        </Field>
                        <Field id="full" label="完整设备标识符: (F)"><TextInput id="full" readOnly value="= +" /></Field>
                        <Field id="color" label="颜色/编号: (C)">
                            <TextInput id="color" />
                            <MiniButton $last>...</MiniButton>
                        </Field>
                        <Field id="pair" label="成对索引: (P)"><TextInput id="pair" /></Field>
                    </Pair>
                </Group>
                <Pair $top={23}>
                    <Field id="area" label="截面积/直径: (R)">
                        <TextInput id="area" />
                        <MiniButton $last>...</MiniButton>
                    </Field>
                    <Field id="unit" label="截面积/直径单位: (O)"><Dropdown id="unit" value="来自项目" /></Field>
                    <Field id="valid" label="有效数据: (V)"><Dropdown id="valid" value="全部数据" /></Field>
                    <Field id="func" label="功能定义: (U)"><TextInput id="func" readOnly value="一般连接" /></Field>
                </Pair>
                <Group $top={13}>
                    <Legend>属性</Legend>
                    <CategoryRow>
                        <label htmlFor="category">类别: (A)</label>
                        <Dropdown id="category" value="所有类别" />
                    </CategoryRow>
                    <GridBox $height={242} $top={18}>
                        <Grid $width={746}>
                            <thead>
                                <tr>
                                    <HeadCell>属性名</HeadCell>
                                    <HeadCell>数值</HeadCell>
                                </tr>
                            </thead>
                            <tbody>
                                {PROPERTIES.map((name, i) => (
                                    <tr key={name}>
                                        <Cell $grey $ring={i === 0 ? 1 : 0}>{name}</Cell>
                                        <Cell>
                                            {i === 9 && <TickBox type="checkbox" aria-label={name} />}
                                            {i === 10 && "单个连接"}
                                        </Cell>
                                    </tr>
                                ))}
                            </tbody>
                        </Grid>
                        <ScrollSlot>
                            <Scroll>
                                <Arrow />
                                <Part $size={170} $thumb />
                                <Part $size={34} />
                                <Arrow turn={180} />
                            </Scroll>
                        </ScrollSlot>
                    </GridBox>
                </Group>
            </TabPanel>
            <Actions $gap={20} $margin="22px -2px 0 0">
                <ActionButton>确定</ActionButton>
                <ActionButton>取消</ActionButton>
                <ActionButton>应用 (A)</ActionButton>
            </Actions>
        </DialogBody>
    </Dialog>
);

const SectionPicker = () => {
    const [picked, setPicked] = useState("6");

    return (
        <Dialog $left={966} $top={283} $width={421} $front>
            <DialogTitle $front>
                <Logo />
                <span>截面积/直径</span>
                <CloseButton aria-label="close"><Cross color="#000" /></CloseButton>
            </DialogTitle>
            <PickerBody>
                <GridBox $height={424}>
                    <Grid $width={359}>
                        <colgroup>
                            <col width="19" />
                            <col width="170" />
                            <col width="170" />
                        </colgroup>
                        <thead>
                            <tr>
                                <HeadCell>行</HeadCell>
                                <HeadCell>截面积/直径</HeadCell>
                                <HeadCell>单位</HeadCell>
                            </tr>
                        </thead>
                        <tbody>
                            {SECTIONS.map((value, i) => (
                                <tr key={value} onClick={() => setPicked(value)}>
                                    <HeadCell>{i + 1}</HeadCell>
                                    <Cell $grey $ring={value === picked ? 2 : 0}>{value}</Cell>
                                    <Cell $grey>来自项目</Cell>
                                </tr>
                            ))}
                        </tbody>
                    </Grid>
                </GridBox>
                <Actions $gap={19} $margin="24px 0 0">
                    <ActionButton $primary>确定</ActionButton>
                    <ActionButton>取消</ActionButton>
                </Actions>
            </PickerBody>
        </Dialog>
    );
};

export default function App() {
    return (
        <Screen>
            <GlobalStyle />
            <DesktopEdge />
            <Window>
                <TitleBar>
                    <Logo />
                    <span>EPLAN Electric P8 2.7 HF16 - E:\JHE\JHE2000\(2)电气图纸\测试多线原理图 - [/1]</span>
                </TitleBar>
                <MenuBar>
                    <Grip />
                    <svg width="15" height="16" viewBox="0 0 15 16" fill="#fff" stroke="#9aa5b1">
                        <path d="M3.500 1.500h7l3 3v10h-10zM10.500 1.500v3h3" />
                    </svg>
                    {MENUS.map(([name, key]) => (
                        <MenuItem key={key}>{name} (<u>{key}</u>)</MenuItem>
                    ))}
                    <MdiButtons>
                        <MdiButton aria-label="minimize"><svg width="10" height="10" stroke="#5f6f84" strokeWidth="2"><path d="M2 8h6" /></svg></MdiButton>
                        <MdiButton aria-label="restore"><svg width="10" height="10" fill="none" stroke="#5f6f84"><path d="M1.500 4.500h5v4h-5zM3.500 4V1.500h5v5H7M3 2h6M1 5h6" /></svg></MdiButton>
                        <MdiButton aria-label="close"><svg width="10" height="10" stroke="#5f6f84" strokeWidth="2"><path d="M1 1l8 8M9 1L1 9" /></svg></MdiButton>
                    </MdiButtons>
                </MenuBar>
                <Bar><Tools items={ROW1} /></Bar>
                <Bar><Tools items={ROW2} /></Bar>
                <Bar $full $height={32}><Tools items={ROW3} /></Bar>
                <Workspace>
                    <Side>
                        <SideTitle>页 - 测试多线原理图</SideTitle>
                        <SideBody>
                            <FieldBox $gap={9} $pad={8}>
                                <label htmlFor="filter">筛选器: (F)</label>
                                <Dropdown id="filter" value="- 未激活 -" />
                                <label htmlFor="value">数值: (V)</label>
                                <SunkenInput id="value" />
                            </FieldBox>
                            <Tree>
                                <TreeItem><TreeIcon /><span>测试宏项目</span></TreeItem>
                                <TreeItem $selected><TreeIcon /><span>测试多线原理图</span></TreeItem>
                            </Tree>
                            <PanelTabs>
                                <PanelTab $on>树</PanelTab>
                                <PanelTab>列表</PanelTab>
                            </PanelTabs>
                        </SideBody>
                        <Splitter />
                        <SideTitle>图形预览</SideTitle>
                        <Preview>
                            <svg><path d="M20 84L320 384" stroke="#f00" strokeWidth="32" strokeLinecap="round" /></svg>
                        </Preview>
                    </Side>
                    <Pane>
                        <Frame>
                            <Well>
                                <Circuit />
                                <Scroll>
                                    <Arrow />
                                    <Part $size={97} />
                                    <Part $size={393} $thumb />
                                    <Part $size={285} />
                                    <Arrow turn={180} />
                                </Scroll>
                                <Scroll $across>
                                    <Part $size={1069} $thumb />
                                    <Part $size={506} />
                                    <Arrow turn={90} />
                                </Scroll>
                            </Well>
                        </Frame>
                    </Pane>
                    <Rail><Tools items={RAIL} rail /></Rail>
                </Workspace>
            </Window>

            <InputBar>
                <svg width="30" height="16" viewBox="0 0 30 16" fill="none">
                    <path d="M1 0h25c4 5 3 9-4 12-6 3-12 3-18 4z" fill="#f4511e" />
                    <path d="M4 5c6 2 12 1 16-3M8 11c6 1 13-1 16-6" stroke="#fff" strokeWidth="2" />
                </svg>
                <div>
                    <Lang>中</Lang>
                    <svg width="16" height="14" fill="#0a6ed1"><path d="M3 0h3v3H3zM9 3h4v3l-3 4H8l2-4H9z" /></svg>
                    <svg width="16" height="14" fill="none"><circle cx="8" cy="3" r="7" fill="#0a6ed1" /><path d="M4 3c1 5 7 5 8 0zM4 0h2M10 0h2" fill="#fff" stroke="#fff" /></svg>
                    <svg width="16" height="14" fill="none" stroke="#0a6ed1" strokeWidth="2"><path d="M3 0c0 7 10 7 10 0M8 5v5M6 9.500h4" /><path d="M8 0v3" strokeWidth="4" /></svg>
                    <svg width="16" height="14" fill="none" stroke="#0a6ed1" strokeWidth="1.500"><path d="M2 0v8h12V0M2 2h12M2 5h12M5 0v8M8 0v8M11 0v8" /></svg>
                    <svg width="16" height="14" fill="#c4c4c4"><path d="M5 0h6v3l4 3v4H1V6l4-2z" /><path d="M9 4h6v6H9z" fill="#ddd" /></svg>
                    <svg width="16" height="14" fill="#0a6ed1"><path d="M0 0h16v3h-3v7H4V3H0z" /></svg>
                    <svg width="16" height="14" fill="#0a6ed1"><path d="M2 0h6v3H2zM10 0h5v3h-5zM2 5h6v5H2zM10 5h5v5h-5z" /></svg>
                </div>
            </InputBar>

            <PropertyDialog />
            <SectionPicker />

            <Ink>
                <path d="M160 575L190 579C200 581 212 581 218 578C226 572 234 566 238 561C241 556 241 549 239 546C236 542 225 543 212 543C195 544 175 548 163 550C157 553 154 561 157 563C162 566 164 573 171 577" />
                <path d="M632 502C650 502 680 510 700 512C715 513 724 512 735 516C750 520 780 520 806 522C840 524 870 523 890 525C910 527 950 528 1013 526" />
                <path d="M994 520C1000 520 1008 523 1013 526C1006 528 1000 535 994 534H984" />
            </Ink>
            <Watermark>https://blog.csdn.net/qq_20792765</Watermark>
        </Screen>
    );
}
